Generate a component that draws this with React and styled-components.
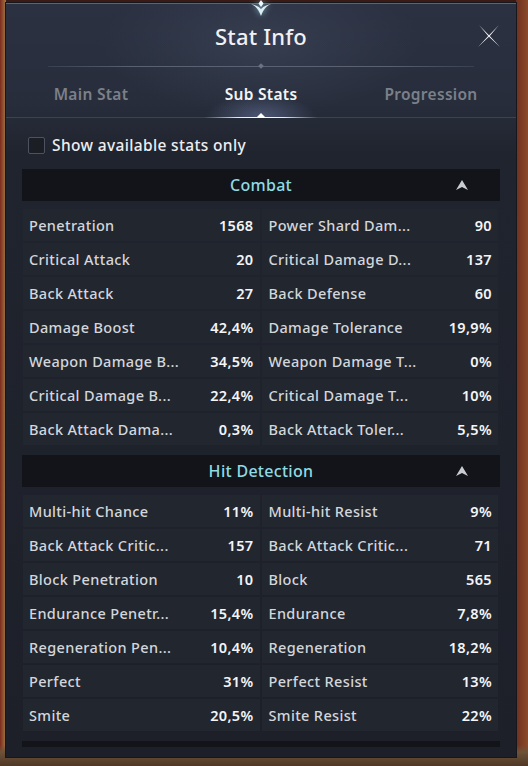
import React from 'react';
import styled, { createGlobalStyle } from 'styled-components';

const GlobalStyle = createGlobalStyle`
  html, body {
    margin: 0;
    padding: 0;
  }
  body {
    width: 528px;
    height: 766px;
    overflow: hidden;
    font-family: "Noto Sans", "Open Sans", sans-serif;
    background:
      linear-gradient(180deg, rgba(0,0,0,0) 0, rgba(0,0,0,0) 745px, #6e5238 752px, #4e3826 766px),
      linear-gradient(90deg, #7e2a1e 0, #a07a42 6px, #3a1a14 6px, #3a1a14 516px, #6e3020 516px, #8a4a2a 528px);
  }
`;

const combat = [
  ['Penetration', '1568', 'Power Shard Dam...', '90'],
  ['Critical Attack', '20', 'Critical Damage D...', '137'],
  ['Back Attack', '27', 'Back Defense', '60'],
  ['Damage Boost', '42,4%', 'Damage Tolerance', '19,9%'],
  ['Weapon Damage B...', '34,5%', 'Weapon Damage T...', '0%'],
  ['Critical Damage B...', '22,4%', 'Critical Damage T...', '10%'],
  ['Back Attack Dama...', '0,3%', 'Back Attack Toler...', '5,5%'],
];

const hitDetection = [
  ['Multi-hit Chance', '11%', 'Multi-hit Resist', '9%'],
  ['Back Attack Critic...', '157', 'Back Attack Critic...', '71'],
  ['Block Penetration', '10', 'Block', '565'],
  ['Endurance Penetr...', '15,4%', 'Endurance', '7,8%'],
  ['Regeneration Pen...', '10,4%', 'Regeneration', '18,2%'],
  ['Perfect', '31%', 'Perfect Resist', '13%'],
  ['Smite', '20,5%', 'Smite Resist', '22%'],
];

const Panel = styled.div`
  position: relative;
  margin: 3px 0 0 6px;
  width: 510px;
  height: 754px;
  display: flex;
  flex-direction: column;
  border-top: 1px solid #5c6474;
  box-sizing: border-box;
  background:
    radial-gradient(ellipse 160px 70px at 50% 40px, rgba(120, 135, 170, 0.16), rgba(0,0,0,0) 100%),
    linear-gradient(180deg, #2b3141 0, #272d3b 100px, #20242e 150px, #1d2029 100%);
  box-shadow: 0 0 0 1px #15171c;
`;

const Crest = styled.svg`
  position: absolute;
  top: -4px;
  left: 50%;
  margin-left: -12px;
  filter: drop-shadow(0 0 3px rgba(170, 230, 240, 0.7));
`;

const Header = styled.div`
  height: 62px;
  display: flex;
  align-items: center;
  justify-content: center;
  position: relative;
`;

const Title = styled.h1`
  margin: 2px 0 0;
  font-size: 22px;
  font-weight: 500;
  color: #f1f1f3;
  letter-spacing: 0.2px;
`;

const Close = styled.button`
  position: absolute;
  right: 15px;
  top: 20px;
  width: 24px;
  height: 24px;
  padding: 0;
  border: 0;
  background: none;
  cursor: pointer;
`;

const Divider = styled.div`
  position: relative;
  height: 1px;
  margin: 0 42px;
  background: linear-gradient(90deg, rgba(95,104,120,0.3), #5a6272 20%, #5a6272 80%, rgba(95,104,120,0.3));

  &::after {
    content: '';
    position: absolute;
    left: 50%;
    top: -2px;
    width: 4px;
    height: 4px;
    margin-left: -2px;
    transform: rotate(45deg);
    background: #6a7385;
  }
`;

const Tabs = styled.div`
  display: grid;
  grid-template-columns: 1fr 1fr 1fr;
  height: 50px;
  position: relative;
  border-bottom: 1px solid #3d4350;
`;

const Tab = styled.div`
  display: flex;
  align-items: center;
  justify-content: center;
  padding-top: 4px;
  font-size: 15.5px;
  font-weight: 600;
  letter-spacing: 0.3px;
  color: ${({ active }) => (active ? '#f3f4f6' : '#7b808a')};
  position: relative;
  ${({ active }) =>
    active &&
    `
    background: radial-gradient(ellipse 55px 22px at 50% 100%, rgba(150, 170, 230, 0.35), rgba(0,0,0,0) 100%);
    &::after {
      content: '';
      position: absolute;
      bottom: -1px;
      left: 28px;
      right: 28px;
      height: 1px;
      background: linear-gradient(90deg, rgba(255,255,255,0), #e8ecf4 30%, #ffffff 50%, #e8ecf4 70%, rgba(255,255,255,0));
    }
    &::before {
      content: '';
      position: absolute;
      bottom: 0;
      left: 50%;
      margin-left: -4px;
      border-left: 4px solid transparent;
      border-right: 4px solid transparent;
      border-bottom: 4px solid #ffffff;
    }
  `}
`;

const Body = styled.div`
  padding: 0 16px;
  display: flex;
  flex-direction: column;
  flex: 1;
  min-height: 0;
`;

const FilterRow = styled.label`
  display: flex;
  align-items: center;
  gap: 7px;
  height: 28px;
  margin: 13px 0 10px 6px;
  font-size: 15.5px;
  font-weight: 500;
  color: #eceef1;
  letter-spacing: 0.35px;
`;

const Checkbox = styled.span`
  width: 15px;
  height: 15px;
  border: 1.5px solid #4c5261;
  border-radius: 2px;
  background: #1b1e25;
`;

const Scroll = styled.div`
  height: 578px;
  overflow: hidden;
`;

const Section = styled.section`
  & + & {
    margin-top: 10px;
  }
`;

const SectionHead = styled.div`
  height: 32px;
  display: flex;
  align-items: center;
  justify-content: center;
  position: relative;
  background: #121419;
  font-size: 16px;
  font-weight: 500;
  color: #8fdbe3;
  letter-spacing: 0.3px;
  margin-bottom: 8px;
`;

const Toggle = styled.svg`
  position: absolute;
  right: 32px;
  top: 11px;
`;

const Grid = styled.div`
  display: grid;
  grid-template-columns: 1fr 1fr;
  column-gap: 2px;
  row-gap: 2px;
  padding: 0 2px 0 1px;
`;

const Cell = styled.div`
  height: 32px;
  display: flex;
  align-items: center;
  justify-content: space-between;
  padding: 0 6px 0 ${({ right }) => (right ? 7 : 6)}px;
  background: #22262f;
  font-size: 14.5px;
  letter-spacing: 0.35px;
`;

const Label = styled.span`
  color: #d3d6db;
  font-weight: 500;
  white-space: nowrap;
`;

const Value = styled.span`
  color: #f4f5f7;
  font-weight: 600;
`;

function StatSection({ title, rows }) {
  return (
    <Section>
      <SectionHead>
        {title}
        {title && (
          <Toggle width="12" height="10" viewBox="0 0 12 10">
            <path d="M6 0 L12 10 L6 7 L0 10 Z" fill="#c9ccd2" />
          </Toggle>
        )}
      </SectionHead>
      {rows && (
        <Grid>
          {rows.map((r, i) => (
            <React.Fragment key={i}>
              <Cell>
                <Label>{r[0]}</Label>
                <Value>{r[1]}</Value>
              </Cell>
              <Cell right>
                <Label>{r[2]}</Label>
                <Value>{r[3]}</Value>
              </Cell>
            </React.Fragment>
          ))}
        </Grid>
      )}
    </Section>
  );
}

export default function App() {
  return (
    <>
      <GlobalStyle />
      <Panel>
        <Crest width="24" height="18" viewBox="0 0 24 18">
          <path
            d="M2 4 C6 6 9 8 12 16 C15 8 18 6 22 4 C18 5 15 6 12 9 C9 6 6 5 2 4 Z"
            fill="#d8eef2"
          />
          <path d="M12 0 L14.5 3.5 L12 7 L9.5 3.5 Z" fill="#eefaff" />
        </Crest>
        <Header>
          <Title>Stat Info</Title>
          <Close aria-label="close">
            <svg width="24" height="24" viewBox="0 0 24 24">
              <path d="M2 1 L12 11.2 L22 1 L12.8 12 L23 23 L12 12.8 L1 23 L11.2 12 Z" fill="#f2f4f8" />
            </svg>
          </Close>
        </Header>
        <Divider />
        <Tabs>
          <Tab>Main Stat</Tab>
          <Tab active>Sub Stats</Tab>
          <Tab>Progression</Tab>
        </Tabs>
        <Body>
          <FilterRow>
            <Checkbox />
            Show available stats only
          </FilterRow>
          <Scroll>
            <StatSection title="Combat" rows={combat} />
            <StatSection title="Hit Detection" rows={hitDetection} />
            <StatSection />
          </Scroll>
        </Body>
      </Panel>
    </>
  );
}
